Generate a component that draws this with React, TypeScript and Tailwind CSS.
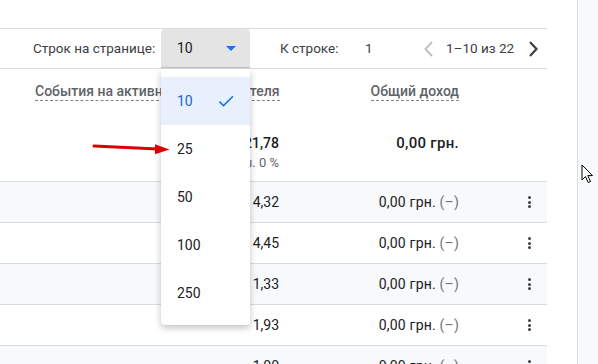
import { useState } from "react";

const rows = [
  { value: "4,32", shaded: true },
  { value: "4,45", shaded: false },
  { value: "1,33", shaded: true },
  { value: "1,93", shaded: false },
  { value: "1,00", shaded: true },
];

const options = ["10", "25", "50", "100", "250"];

function Kebab() {
  return (
    <div className="flex flex-col gap-[1.5px]">
      <span className="block h-[3px] w-[3px] rounded-full bg-[#3c4043]" />
      <span className="block h-[3px] w-[3px] rounded-full bg-[#3c4043]" />
      <span className="block h-[3px] w-[3px] rounded-full bg-[#3c4043]" />
    </div>
  );
}

function PageSizeMenu({ selected }: { selected: string }) {
  return (
    <div className="absolute left-0 top-[40px] z-10 w-[89px] rounded-b-[4px] bg-white py-2 shadow-[0_3px_7px_rgba(0,0,0,0.24)]">
      {options.map((o) => (
        <div
          key={o}
          className={`flex h-[48px] items-center justify-between pl-4 pr-[14px] text-[14px] ${
            o === selected ? "bg-[#e8f0fe] text-[#1967d2]" : "text-[#202124]"
          }`}
        >
          <span>{o}</span>
          {o === selected && (
            <svg width="20" height="20" viewBox="0 0 24 24" fill="#1a73e8">
              <path d="M9 16.17L4.83 12l-1.42 1.41L9 19 21 7l-1.41-1.41z" />
            </svg>
          )}
        </div>
      ))}
    </div>
  );
}

export default function App() {
  const [pageSize] = useState("10");

  return (
    <div className="relative flex h-[364px] w-[598px] overflow-hidden whitespace-nowrap bg-white font-['Roboto',sans-serif] text-[#202124]">
      <div className="w-[577px] shrink-0">
        <div className="h-[28px]" />

        <div className="flex h-[41px] w-[547px] items-center border-y border-[#dadce0] text-[13.5px] text-[#3c4043]">
          <span className="ml-[33px] w-[120px] shrink-0">Строк на странице:</span>
          <div className="relative ml-[8px] shrink-0 self-stretch">
            <div className="flex h-full w-[89px] items-center justify-between rounded-t-[4px] border-b border-[#c4c4c4] bg-[#e4e4e4] pl-4 pr-[14px] text-[14px] text-[#202124]">
              <span>{pageSize}</span>
              <svg width="10" height="5" viewBox="0 0 10 5" fill="#1a73e8">
                <path d="M0 0h10L5 5z" />
              </svg>
            </div>
            <PageSizeMenu selected={pageSize} />
          </div>
          <span className="ml-[30px] w-[58px] shrink-0">К строке:</span>
          <span className="ml-[27px] w-[8px] shrink-0">1</span>
          <svg className="ml-[50px] shrink-0" width="11" height="16" viewBox="0 0 11 16" fill="none" stroke="#bdc1c6" strokeWidth="2">
            <path d="M9 1L2.5 8L9 15" />
          </svg>
          <span className="ml-[12px] w-[68px] shrink-0">1–10 из 22</span>
          <svg className="ml-[14px] shrink-0" width="11" height="16" viewBox="0 0 11 16" fill="none" stroke="#3c4043" strokeWidth="2.2">
            <path d="M2 1L8.5 8L2 15" />
          </svg>
        </div>

        <div className="w-[547px]">
          <div className="flex h-[44px] items-center text-[14px] font-medium text-[#5f6368]">
            <span className="ml-[35px] border-b border-dashed border-[#80868b] leading-[18px]">События на активного пользователя</span>
            <span className="ml-auto mr-[88px] border-b border-dashed border-[#80868b] leading-[18px]">Общий доход</span>
          </div>

          <div className="flex h-[69px] border-b border-[#dadce0] pt-[20px]">
            <div className="w-[279px] text-right">
              <div className="text-[14px] font-medium leading-[20px]">21,78</div>
              <div className="text-[13px] leading-[20px] text-[#5f6368]">Ср. знач. 0 %</div>
            </div>
            <div className="w-[180px] text-right text-[15px] font-medium leading-[20px] tracking-[0.3px]">0,00 грн.</div>
          </div>

          {rows.map((r, i) => (
            <div
              key={i}
              className={`flex h-[41px] items-center border-b border-[#dadce0] text-[14px] ${r.shaded ? "bg-[#f8f9fa]" : "bg-white"}`}
            >
              <div className="w-[279px] text-right">{r.value}</div>
              <div className="w-[180px] text-right tracking-[0.2px]">
                0,00 грн. <span className="text-[#70757a]">(–)</span>
              </div>
              <div className="ml-[69px]">
                <Kebab />
              </div>
            </div>
          ))}
        </div>
      </div>

      <div className="relative flex-1 border-l border-[#dadce0] bg-[#f8f9fa]">
        <svg className="absolute left-[3px] top-[164px]" width="13" height="20" viewBox="0 0 13 20">
          <path d="M1 1L1 16L4.5 12.5L7.2 18.5L9.5 17.5L6.8 11.6L11.5 11.6Z" fill="white" stroke="black" strokeWidth="1" strokeLinejoin="round" />
        </svg>
      </div>

      <svg className="absolute left-[92px] top-[142px] z-20" width="82" height="15" viewBox="0 0 82 15">
        <path d="M2 4L66 7" stroke="#dd0000" strokeWidth="3" strokeLinecap="round" />
        <path d="M63 2.3L77.5 7.5L63 12.3Z" fill="#dd0000" />
      </svg>
    </div>
  );
}
